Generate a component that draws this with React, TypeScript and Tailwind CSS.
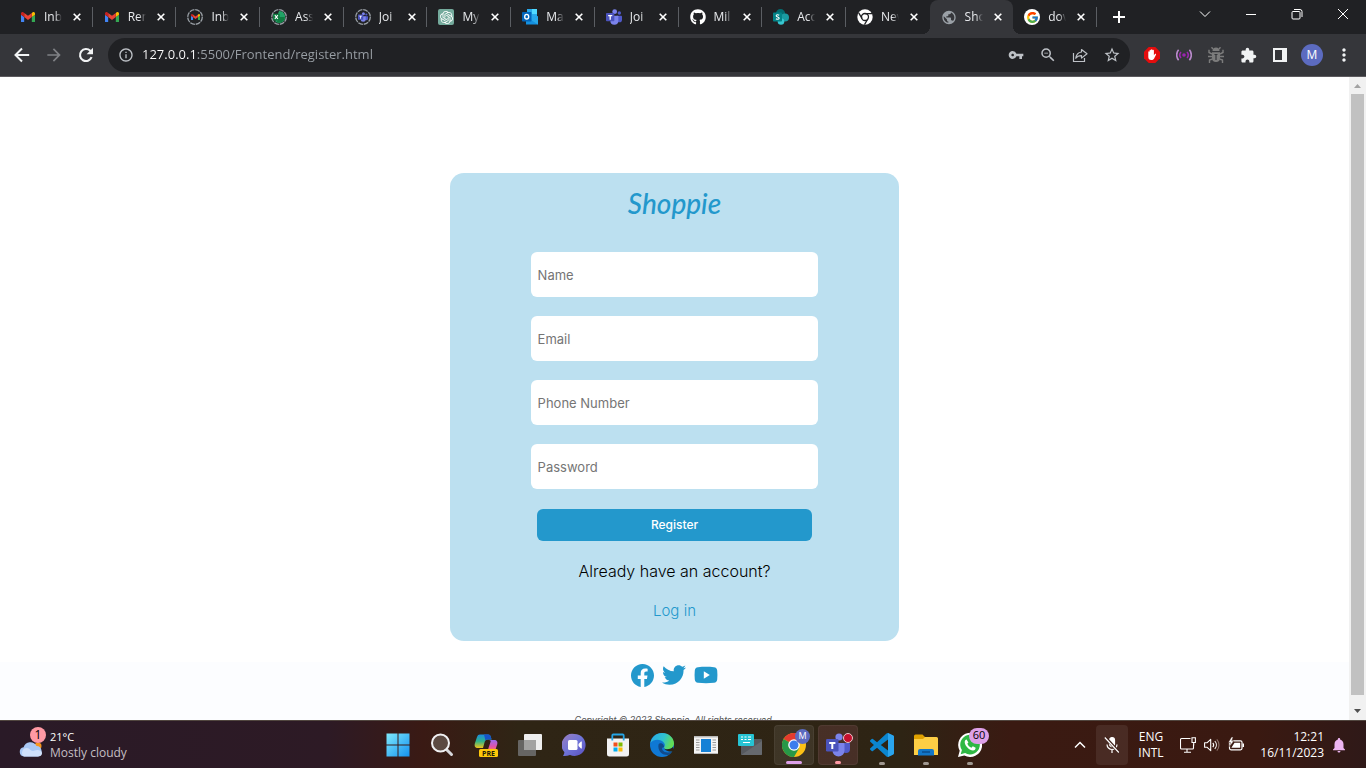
import type { ReactNode } from "react";
import {
  MdArrowForward,
  MdInfoOutline,
  MdVpnKey,
  MdZoomOut,
  MdStarBorder,
  MdExtension,
  MdMoreVert,
  MdPublic,
  MdNotifications,
} from "react-icons/md";
import { FaGithub, FaTwitter } from "react-icons/fa";
import { BsFacebook } from "react-icons/bs";
import { SiOpenai } from "react-icons/si";
import { FcGoogle } from "react-icons/fc";

/* ---------- tab icons ---------- */

function Gmail({ className }: { className?: string }) {
  return (
    <svg viewBox="52 42 88 66" className={className}>
      <path fill="#4285f4" d="M58 108h14V74L52 59v43c0 3.32 2.69 6 6 6" />
      <path fill="#34a853" d="M120 108h14c3.32 0 6-2.69 6-6V59l-20 15" />
      <path fill="#fbbc04" d="M120 48v26l20-15v-8c0-7.42-8.47-11.65-14.4-7.2" />
      <path fill="#ea4335" d="M72 74V48l24 18 24-18v26L96 92" />
      <path fill="#c5221f" d="M52 51v8l20 15V48l-5.6-4.2c-5.94-4.45-14.4-.22-14.4 7.2" />
    </svg>
  );
}

function Teams({ className }: { className?: string }) {
  return (
    <svg viewBox="0 0 24 24" className={className}>
      <circle cx="20" cy="6" r="2.6" fill="#5059c9" />
      <path d="M16 10h7a1 1 0 0 1 1 1v5a4 4 0 0 1-8 0z" fill="#5059c9" />
      <circle cx="13" cy="4" r="3.6" fill="#7b83eb" />
      <path d="M7 10h10.500a1 1 0 0 1 1 1v6.500a6 6 0 0 1-12 0z" fill="#7b83eb" />
      <rect x="0" y="6" width="12.500" height="12.500" rx="1.200" fill="#4b53bc" />
      <path d="M3.200 9h6.200v1.900H7.300V16H5.300v-5.100H3.200z" fill="#fff" />
    </svg>
  );
}

function Loading({ children }: { children: ReactNode }) {
  return (
    <span className="relative flex size-4 items-center justify-center">
      <svg viewBox="0 0 16 16" className="absolute inset-0 size-4">
        <circle cx="8" cy="8" r="7.300" fill="none" stroke="#9aa0a6" strokeWidth="1.300" strokeDasharray="4.900 .830" />
      </svg>
      {children}
    </span>
  );
}

function Excel() {
  return (
    <svg viewBox="0 0 16 16" className="size-3">
      <path d="M8 0a8 8 0 1 1-5 14z" fill="#21a366" />
      <path d="M8 8h8a8 8 0 0 1-11 7z" fill="#107c41" />
      <rect x="0" y="3.500" width="9" height="9" rx="1" fill="#107c41" />
      <path d="M2.500 5.500l4 5M6.500 5.500l-4 5" stroke="#fff" strokeWidth="1.400" />
    </svg>
  );
}

function Outlook() {
  return (
    <svg viewBox="0 0 16 16" className="size-4">
      <rect x="5" y="0" width="10" height="11" fill="#28a8ea" />
      <rect x="10" y="0" width="5" height="5" fill="#50d9ff" />
      <path d="M4 7l6 4 6-4v8.500H4z" fill="#1490df" />
      <path d="M16 7v8.500L9 11z" fill="#28a8ea" />
      <rect x="0" y="3" width="9.500" height="9.500" rx=".8" fill="#0364b8" />
      <ellipse cx="4.700" cy="7.700" rx="2" ry="2.300" fill="none" stroke="#fff" strokeWidth="1.400" />
    </svg>
  );
}

function SharePoint() {
  return (
    <svg viewBox="0 0 16 16" className="size-4">
      <circle cx="7.500" cy="4.700" r="4.700" fill="#036c70" />
      <circle cx="12" cy="8.500" r="4" fill="#1a9ba1" />
      <circle cx="8" cy="12.500" r="3.300" fill="#37c6d0" />
      <rect x="0" y="3.500" width="9" height="9" rx=".8" fill="#038387" />
      <path d="M6.200 6.200C5 5.400 3.200 5.500 3.200 6.700c0 1.500 3 .9 3 2.500 0 1.300-2 1.400-3.200.5" fill="none" stroke="#fff" strokeWidth="1.100" />
    </svg>
  );
}

function ChromeMono() {
  return (
    <svg viewBox="0 0 16 16" className="size-4">
      <circle cx="8" cy="8" r="7.700" fill="#fff" />
      <circle cx="8" cy="8" r="3.500" fill="#fff" stroke="#202124" strokeWidth="1.300" />
      <path d="M8 4.600h7M5.100 9.700L1.700 3.900M10.900 9.700L7.500 15.600" stroke="#202124" strokeWidth="1.300" />
    </svg>
  );
}

const tabs: { title: string; icon: ReactNode; active?: boolean; line?: boolean }[] = [
  { title: "Inb", icon: <Gmail className="w-[14px]" />, line: true },
  { title: "Ren", icon: <Gmail className="w-[14px]" />, line: true },
  { title: "Inb", icon: <Loading><Gmail className="w-[9px]" /></Loading>, line: true },
  { title: "Ass", icon: <Loading><Excel /></Loading>, line: true },
  { title: "Joi", icon: <Loading><Teams className="size-[10px]" /></Loading>, line: true },
  {
    title: "My",
    icon: (
      <span className="flex size-4 items-center justify-center rounded-[2px] bg-[#74aa9c] text-white">
        <SiOpenai size={13} />
      </span>
    ),
    line: true,
  },
  { title: "Ma", icon: <Outlook />, line: true },
  { title: "Joi", icon: <Teams className="size-4" />, line: true },
  { title: "Mil", icon: <FaGithub size={16} className="text-white" />, line: true },
  { title: "Acc", icon: <SharePoint />, line: true },
  { title: "Nev", icon: <ChromeMono /> },
  { title: "Sho", icon: <MdPublic size={17} className="text-[#9aa0a6]" />, active: true },
  {
    title: "dov",
    icon: (
      <span className="flex size-4 items-center justify-center rounded-full bg-white">
        <FcGoogle size={13} />
      </span>
    ),
    line: true,
  },
];

function TabFoot({ side }: { side: "left" | "right" }) {
  return (
    <span
      className={
        side === "left"
          ? "absolute bottom-0 -left-2 size-2 bg-[radial-gradient(circle_at_0_0,transparent_8px,#35363a_8px)]"
          : "absolute bottom-0 -right-2 size-2 bg-[radial-gradient(circle_at_100%_0,transparent_8px,#35363a_8px)]"
      }
    />
  );
}

function TabStrip() {
  return (
    <header className="flex h-[34px] shrink-0 bg-[#202124] pl-[9px] text-[#e8eaed]">
      <div role="tablist" className="flex max-w-[1088px] min-w-0 flex-1">
        {tabs.map((t, i) => (
          <div
            key={i}
            role="tab"
            aria-selected={!!t.active}
            className={
              "relative flex min-w-0 flex-1 items-center pl-[11px] " +
              (t.active ? "rounded-t-lg bg-[#35363a]" : "")
            }
          >
            {t.active && <TabFoot side="left" />}
            {t.active && <TabFoot side="right" />}
            <span className="flex size-4 shrink-0 items-center justify-center">{t.icon}</span>
            <span className="ml-2 w-[18px] overflow-hidden text-xs whitespace-nowrap [mask-image:linear-gradient(to_right,black_60%,transparent)]">
              {t.title}
            </span>
            <button aria-label="Close tab" className="ml-[7px] flex size-4 items-center justify-center">
              <svg viewBox="0 0 8 8" className="size-2">
                <path d="M.7.7l6.600 6.600M7.300.7L.7 7.300" stroke="#fff" strokeWidth="1.600" />
              </svg>
            </button>
            {t.line && <span className="ml-auto h-5 w-px bg-[#5b5e63]" />}
          </div>
        ))}
      </div>
      <button aria-label="New tab" className="flex w-11 items-center justify-center">
        <svg viewBox="0 0 12 12" className="size-3">
          <path d="M6 0v12M0 6h12" stroke="#fff" strokeWidth="2" />
        </svg>
      </button>
      <div className="ml-auto flex h-7">
        {[
          ["Search tabs", "M1 3.500l5 5 5-5"],
          ["Minimize", "M1 6.500h10"],
          ["Restore", "M3 1.500h6a2 2 0 0 1 2 2V9M2 3.500h6a1 1 0 0 1 1 1V10a1 1 0 0 1-1 1H2a1 1 0 0 1-1-1V4.500a1 1 0 0 1 1-1z"],
          ["Close", "M1 1l10 10M11 1L1 11"],
        ].map(([label, d]) => (
          <button key={label} aria-label={label} className="flex w-[46px] items-center justify-center">
            <svg viewBox="0 0 12 12" className="size-3" fill="none" stroke="#fff">
              <path d={d} />
            </svg>
          </button>
        ))}
      </div>
    </header>
  );
}

function ToolButton({ label, children }: { label: string; children: ReactNode }) {
  return (
    <button aria-label={label} className="flex size-8 shrink-0 items-center justify-center">
      {children}
    </button>
  );
}

function Toolbar() {
  return (
    <nav className="flex h-[43px] shrink-0 items-center border-b border-[#5c5a5e] bg-[#35363a] px-1.5 text-[#f1f3f4]">
      <ToolButton label="Back">
        <svg viewBox="0 0 16 16" className="size-4" fill="none" stroke="currentColor" strokeWidth="2">
          <path d="M15.200 8H2.500M8 1.500L1.500 8 8 14.500" />
        </svg>
      </ToolButton>
      <ToolButton label="Forward"><MdArrowForward size={20} className="text-[#7f8185]" /></ToolButton>
      <ToolButton label="Reload">
        <svg viewBox="0 0 16 16" className="size-4">
          <path d="M13.600 10.200A6 6 0 1 1 12.300 3.800L13.500 5" fill="none" stroke="currentColor" strokeWidth="2.100" />
          <path d="M15 .8v6.400H8.600z" fill="currentColor" />
        </svg>
      </ToolButton>
      <div className="mx-1.5 flex h-[34px] flex-1 items-center rounded-full bg-[#202124] pr-0.5 pl-2.5 text-[#bdc1c6]">
        <MdInfoOutline size={16} className="shrink-0" />
        <input
          aria-label="Address"
          defaultValue="127.0.0.1:5500/Frontend/register.html"
          className="ml-2 min-w-0 flex-1 bg-linear-to-r from-white from-[55px] to-[#9aa0a6] to-[55px] bg-clip-text text-[13px] text-transparent outline-none"
        />
        <ToolButton label="Passwords"><MdVpnKey size={16} /></ToolButton>
        <ToolButton label="Zoom"><MdZoomOut size={18} /></ToolButton>
        <ToolButton label="Share">
          <svg viewBox="0 0 16 16" className="size-4" fill="none" stroke="currentColor" strokeWidth="1.200">
            <path d="M1.500 6v8.500h11V11" />
            <path d="M9.500 2.500L15 6.800l-5.500 4.300V8.600C7 8.600 5 9.400 3.800 11.300 4.200 8 6.200 5.500 9.500 5z" strokeLinejoin="round" />
          </svg>
        </ToolButton>
        <ToolButton label="Bookmark"><MdStarBorder size={18} /></ToolButton>
      </div>
      <ToolButton label="Ad blocker">
        <svg viewBox="0 0 16 16" className="size-4">
          <path d="M4.700 0h6.600L16 4.700v6.600L11.300 16H4.700L0 11.300V4.700z" fill="#e40d0d" />
          <path d="M4.300 8.200V5c0-.9 1.300-.9 1.300 0V3.600c0-1 1.400-1 1.400 0V3c0-1 1.500-1 1.500 0v.6c0-1 1.400-1 1.400 0v4.600l.8-1c.7-.8 1.800-.2 1.300.6l-2 4c-.6 1-1.300 1.200-2.700 1.200-2 0-3-1.200-3-3z" fill="#fff" />
        </svg>
      </ToolButton>
      <ToolButton label="Live reload">
        <svg viewBox="0 0 16 16" className="size-4" fill="none" stroke="#9c27b0" strokeWidth="1.600">
          <circle cx="8" cy="8" r="1" fill="#9c27b0" />
          <path d="M5 5a4.500 4.500 0 0 0 0 6M11 5a4.500 4.500 0 0 1 0 6" />
          <path d="M2.600 2.800a8 8 0 0 0 0 10.400M13.400 2.800a8 8 0 0 1 0 10.400" stroke="#b98acb" />
        </svg>
      </ToolButton>
      <ToolButton label="Debugger">
        <svg viewBox="0 0 16 16" className="size-4" fill="#7c7c7c">
          <path d="M4.500 4a3.500 3.500 0 0 1 7 0z" />
          <path d="M4 5.300h8V11a4 4 0 0 1-8 0z" />
          <path d="M4 7L1 5.500V2.800M12 7l3-1.500V2.800M4 9.500H0M12 9.500h4M4.500 12L1.500 13v3M11.500 12l3 1v3M5 2L3.500.3M11 2l1.500-1.700" fill="none" stroke="#7c7c7c" strokeWidth="1.400" />
          <path d="M8 7.500V13M6.500 7.500h3" stroke="#35363a" strokeWidth="1.200" />
        </svg>
      </ToolButton>
      <ToolButton label="Extensions"><MdExtension size={17} /></ToolButton>
      <ToolButton label="Side panel">
        <svg viewBox="0 0 14 14" className="size-3.5">
          <path d="M0 0h14v14H0zM2 2v10h7V2z" fill="#f1f3f4" fillRule="evenodd" />
        </svg>
      </ToolButton>
      <ToolButton label="Profile">
        <span className="flex size-[22px] items-center justify-center rounded-full bg-[#5c6bc0] text-xs text-white">M</span>
      </ToolButton>
      <ToolButton label="Menu"><MdMoreVert size={20} /></ToolButton>
    </nav>
  );
}

/* ---------- register page ---------- */

const fields = [
  { id: "name", label: "Name", type: "text" },
  { id: "email", label: "Email", type: "email" },
  { id: "phone", label: "Phone Number", type: "tel" },
  { id: "password", label: "Password", type: "password" },
];

function RegisterPage() {
  return (
    <main className="flex min-w-0 flex-1 flex-col items-center overflow-hidden bg-white pt-24 font-[Inter,sans-serif]">
      <form className="flex w-1/3 shrink-0 flex-col items-center rounded-[14px] bg-[#bce0f0] pt-3 pb-[18px]">
        <h1 className="h-[67px] font-[Lato,sans-serif] text-[28px] leading-9 font-medium text-[#2398cc] italic">
          Shoppie
        </h1>
        <div className="flex w-[64%] flex-col gap-[19px]">
          {fields.map((f) => (
            <label key={f.id} htmlFor={f.id} className="block">
              <input
                id={f.id}
                type={f.type}
                aria-label={f.label}
                placeholder={f.label}
                className="block h-[45px] w-full rounded-md bg-white px-[7px] text-[13px] text-black outline-none placeholder:text-[#757575]"
              />
            </label>
          ))}
        </div>
        <button type="button" className="mt-5 h-8 w-[61%] rounded-md bg-[#2398cc] text-xs font-medium text-white">
          Register
        </button>
        <p className="mt-[18px] text-base leading-6 font-light text-black">Already have an account?</p>
        <a href="#login" className="mt-4 text-[15px] leading-6 font-light text-[#2398cc]">
          Log in
        </a>
      </form>
      <footer className="mt-[21px] flex w-full shrink-0 flex-col items-center bg-[#fcfdff] pt-px">
        <div className="flex items-center gap-2 text-[#2398cc]">
          <a href="#facebook" aria-label="Facebook"><BsFacebook size={23} /></a>
          <a href="#twitter" aria-label="Twitter"><FaTwitter size={24} /></a>
          <a href="#youtube" aria-label="YouTube">
            <svg viewBox="0 0 24 24" className="size-6">
              <path d="M4 4.200C9 3.700 15 3.700 20 4.200c2 .2 3 1.300 3.200 3.300.3 3 .3 6 0 9-.2 2-1.200 3.100-3.200 3.300-5 .5-11 .5-16 0-2-.2-3-1.300-3.200-3.300-.3-3-.3-6 0-9C1 5.500 2 4.400 4 4.200z" fill="currentColor" />
              <path d="M9.800 8.300l6 3.700-6 3.700z" fill="#fff" />
            </svg>
          </a>
        </div>
        <p className="mt-[25px] text-[9px] leading-4 text-[#555555] italic">
          Copyright © 2023 Shoppie. All rights reserved.
        </p>
      </footer>
    </main>
  );
}

function Scrollbar() {
  return (
    <div aria-hidden="true" className="flex w-[17px] shrink-0 flex-col items-center bg-[#f1f1f1]">
      <svg viewBox="0 0 17 17" className="size-[17px] shrink-0"><path d="M5 11l3.500-4 3.500 4z" fill="#a3a3a3" /></svg>
      <div className="w-[13px] flex-1 bg-[#c1c1c1]" />
      <div className="h-2" />
      <svg viewBox="0 0 17 17" className="size-[17px] shrink-0"><path d="M5 6l3.500 4L12 6z" fill="#505050" /></svg>
    </div>
  );
}

/* ---------- taskbar ---------- */

const apps: { label: string; icon: ReactNode; box?: string; mark?: string; badge?: ReactNode }[] = [
  {
    label: "Start",
    icon: (
      <svg viewBox="0 0 24 24" className="size-6">
        <defs>
          <linearGradient id="win" x1="0" y1="0" x2="1" y2="1" gradientUnits="objectBoundingBox">
            <stop offset="0" stopColor="#7fe9fc" />
            <stop offset="1" stopColor="#1492f0" />
          </linearGradient>
        </defs>
        <path d="M.5.500h11v11H.5zM12.500.500h11v11h-11zM.5 12.500h11v11H.5zM12.500 12.500h11v11h-11z" fill="url(#win)" />
      </svg>
    ),
  },
  {
    label: "Search",
    icon: (
      <svg viewBox="0 0 24 24" className="size-6">
        <path d="M16 16l5.500 5.500" stroke="#d8d8dc" strokeWidth="3" strokeLinecap="round" />
        <circle cx="10.500" cy="10" r="8.500" fill="#5c4a42" stroke="#f0f0f2" strokeWidth="2" />
      </svg>
    ),
  },
  {
    label: "Copilot",
    icon: (
      <svg viewBox="0 0 24 24" className="size-6">
        <defs>
          <linearGradient id="cpA" x1="0" y1="0" x2="0" y2="1">
            <stop offset="0" stopColor="#1b8be0" />
            <stop offset=".5" stopColor="#2fb38a" />
            <stop offset="1" stopColor="#f0c419" />
          </linearGradient>
          <linearGradient id="cpB" x1="0" y1="0" x2="0" y2="1">
            <stop offset="0" stopColor="#9a6bf0" />
            <stop offset=".6" stopColor="#e352a8" />
            <stop offset="1" stopColor="#f78a4a" />
          </linearGradient>
        </defs>
        <path d="M6 1.500h8c2 0 2.500 1 3 3l.5 2H14c-2 0-3 1-3.500 3L9 15H4c-3 0-4-2-3-5l2-6c.6-1.700 1.500-2.500 3-2.500z" fill="url(#cpA)" />
        <path d="M14 1.500c2 0 2.500 1 3 3l.5 2H14c-1 0-2 .5-2.500 1.300L10 1.500z" fill="#1653c8" />
        <path d="M15 7h5c3 0 4 2 3 5l-2 6h-9c2 0 2-1 2.500-3l2-6c.4-1 .5-2-1.500-2z" fill="url(#cpB)" />
        <rect x="5" y="16" width="19" height="8" rx="1.500" fill="#ffc80a" />
        <text x="14.500" y="22.600" textAnchor="middle" fontSize="7" fontWeight="700" fill="#201a08" fontFamily="Open Sans, sans-serif">PRE</text>
      </svg>
    ),
  },
  {
    label: "Task view",
    icon: (
      <svg viewBox="0 0 24 24" className="size-6">
        <rect x="6" y="1" width="18" height="16" rx="1" fill="#eeeeee" />
        <rect x="0" y="7" width="18" height="16" rx="1" fill="#666563" />
        <path d="M6 7h12v10H6z" fill="#a2a2a1" />
      </svg>
    ),
  },
  {
    label: "Chat",
    icon: (
      <svg viewBox="0 0 24 24" className="size-6">
        <defs>
          <linearGradient id="chat" x1="0" y1="0" x2="1" y2="1">
            <stop offset="0" stopColor="#9a7fc0" />
            <stop offset=".5" stopColor="#6f74d8" />
            <stop offset="1" stopColor="#5a4fc0" />
          </linearGradient>
        </defs>
        <path d="M12.500 1A11 11 0 1 1 8 22c-2 .8-4.500 1.200-7 1 1-1.600 1.500-3 1.300-4A11 11 0 0 1 12.500 1z" fill="url(#chat)" />
        <rect x="6" y="7" width="9.500" height="10" rx="1.500" fill="#fff" />
        <path d="M16.500 11l2.500-2.500h.8v7H19l-2.500-2.500z" fill="#fff" />
      </svg>
    ),
  },
  {
    label: "Store",
    icon: (
      <svg viewBox="0 0 24 24" className="size-6">
        <path d="M1 5.500h22V21a2.500 2.500 0 0 1-2.500 2.500h-17A2.500 2.500 0 0 1 1 21z" fill="#f2f2f2" />
        <path d="M6.300 7.500V2.500a1 1 0 0 1 1-1h9.400a1 1 0 0 1 1 1v5" fill="none" stroke="#25a5e6" strokeWidth="1.800" />
        <path d="M7.500 9.500h4v4h-4z" fill="#f1511b" />
        <path d="M12.500 9.500h4v4h-4z" fill="#80bb01" />
        <path d="M7.500 14.500h4v4h-4z" fill="#00adef" />
        <path d="M12.500 14.500h4v4h-4z" fill="#fbbc09" />
      </svg>
    ),
  },
  {
    label: "Edge",
    icon: (
      <svg viewBox="0 0 24 24" className="size-6">
        <defs>
          <linearGradient id="edge" x1="0" y1="0" x2="1" y2=".3">
            <stop offset="0" stopColor="#2aa8e8" />
            <stop offset=".6" stopColor="#2fc2cf" />
            <stop offset="1" stopColor="#62dd56" />
          </linearGradient>
        </defs>
        <circle cx="12" cy="12" r="12" fill="#0f78d4" />
        <path d="M.4 10C1.500 4 6 0 12 0c7 0 12 5 12 10.500 0 3.500-3 5.700-6.500 5.700-2.500 0-3.800-1-3.500-1.800 1.200-1.400 1-3.200.1-4.400C11 6 4 5.500.4 10z" fill="url(#edge)" />
        <path d="M8.500 11.500c-1 6 3 11 10 10.500l3.500-3.500c-3 1.800-8 1.200-9.500-1.500-1-1.800 0-3.200 1.500-2.600.5-3.500-4-5.400-5.500-2.900z" fill="#114a8b" />
        <path d="M14 14.400c-.3.800 1 1.800 3.500 1.800 2 0 4-.7 5.400-2.200L24 17l-1.600 1.600c-3.400 0-8-1-8.400-4.200z" fill="#2b2415" />
      </svg>
    ),
  },
  {
    label: "News",
    icon: (
      <svg viewBox="0 0 24 24" className="size-6">
        <rect x="0" y="3" width="24" height="18" fill="#f4f4f4" />
        <path d="M0 3h24v1.500H0zM0 20h24v1H0z" fill="#b9b9b9" />
        <rect x="7" y="6" width="10" height="13" fill="#1581d6" />
        <path d="M2 7h3.500M2 9.500h3.500M2 12h3.500M2 14.500h3.500M2 17h3.500M18.500 7H22M18.500 9.500H22M18.500 12H22M18.500 14.500H22M18.500 17H22" stroke="#9a9a9a" />
      </svg>
    ),
  },
  {
    label: "Remote keyboard",
    icon: (
      <svg viewBox="0 0 24 24" className="size-6">
        <rect x="3" y="6" width="21" height="16" rx="1" fill="#56595e" />
        <path d="M3 22L24 8v13a1 1 0 0 1-1 1z" fill="#66696e" />
        <rect x="0" y="1" width="16" height="12" rx="1" fill="#26c4d4" />
        <path d="M3 4h2M6.500 4h2M10 4h3M3 6.500h2M6.500 6.500h2M10 6.500h3M5 9.500h7" stroke="#fff" strokeWidth="1.200" />
      </svg>
    ),
  },
  {
    label: "Chrome",
    box: "bg-white/8 border border-white/5",
    mark: "w-4 bg-[#dda0e8]",
    icon: (
      <svg viewBox="0 0 24 24" className="size-6">
        <circle cx="12" cy="12" r="12" fill="#fbc116" />
        <path d="M12 12L1.600 6A12 12 0 0 1 22.400 6z" fill="#e33b2e" />
        <path d="M1.600 6A12 12 0 0 0 12 24l5.200-9L12 12z" fill="#279847" />
        <circle cx="12" cy="12" r="5.800" fill="#fff" />
        <circle cx="12" cy="12" r="4.500" fill="#3b7ded" />
      </svg>
    ),
    badge: (
      <span className="absolute top-[3px] right-[3px] flex size-[15px] items-center justify-center rounded-full bg-[#5c6bc0] text-[9px] text-white">M</span>
    ),
  },
  {
    label: "Teams",
    box: "bg-[#ff80b0]/12 border border-white/5",
    mark: "w-1.5 bg-[#ff99a4]",
    icon: <Teams className="size-6" />,
    badge: <span className="absolute top-[7px] right-[4px] size-[10px] rounded-full border border-[#e9c4c8] bg-[#c50f2e]" />,
  },
  {
    label: "Visual Studio Code",
    mark: "w-1.5 bg-[#a09890]",
    icon: (
      <svg viewBox="0 0 24 24" className="size-6">
        <path
          d="M23.150 2.587L18.210.210a1.494 1.494 0 0 0-1.705.290l-9.460 8.630-4.120-3.128a.999.999 0 0 0-1.276.057L.327 7.261A1 1 0 0 0 .326 8.740L3.899 12 .326 15.260a1 1 0 0 0 .001 1.479L1.650 17.940a.999.999 0 0 0 1.276.057l4.120-3.128 9.460 8.630a1.492 1.492 0 0 0 1.704.290l4.942-2.377A1.500 1.500 0 0 0 24 20.060V3.939a1.500 1.500 0 0 0-.850-1.352zm-5.146 14.861L10.826 12l7.178-5.448v10.896z"
          fill="#0b86cf"
        />
        <path d="M18 0.100l5.200 2.500c.5.300.8.800.8 1.300v16.200c0 .5-.3 1-.8 1.300L18 23.900z" fill="#2aa5ee" />
      </svg>
    ),
  },
  {
    label: "File Explorer",
    mark: "w-1.5 bg-[#a09890]",
    icon: (
      <svg viewBox="0 0 24 24" className="size-6">
        <path d="M0 3a1.500 1.500 0 0 1 1.500-1.500h7L11 4v5H0z" fill="#e0a100" />
        <path d="M0 6h9l2-2h11.500A1.500 1.500 0 0 1 24 5.500V22H0z" fill="#fdce45" />
        <path d="M4 22.500V18a2 2 0 0 1 2-2h12a2 2 0 0 1 2 2v4.500z" fill="#1277c9" />
        <path d="M8 19h8" stroke="#0b4f93" strokeWidth="1.600" />
      </svg>
    ),
  },
  {
    label: "WhatsApp",
    mark: "w-1.5 bg-[#a09890]",
    icon: (
      <svg viewBox="0 0 24 24" className="size-6">
        <path d="M0 24l1.700-6.200A12 12 0 1 1 6.300 22.400z" fill="#fff" />
        <path d="M2.700 21.300l1.200-4.200a9.800 9.800 0 1 1 3.200 3z" fill="#2fb844" />
        <path d="M8.600 6.500c-.9 0-2 1.300-1.900 2.700.3 4 4.800 8.200 8.300 8.200 1.600 0 2.700-1 2.600-2.600l-2.800-1.500-1.300 1.500c-2.200-.9-3.300-2-4.200-4l1.100-1.300z" fill="#fff" />
      </svg>
    ),
    badge: (
      <span className="absolute top-[3px] left-[19px] flex h-4 w-5 items-center justify-center rounded-full bg-[#dda0e8] text-[11px] text-black">60</span>
    ),
  },
];

function Taskbar() {
  return (
    <footer className="grid h-12 shrink-0 grid-cols-[1fr_auto_1fr] border-t border-[#51463f] bg-[linear-gradient(90deg,#2a1a27_0%,#2d1a25_24%,#3a1a14_31%,#2f2515_38%,#2e2414_66%,#3a1a12_74%,#3a1911_92%,#2f1918_100%)] text-xs text-white">
      <button className="flex items-center gap-[7px] pl-[19px] text-left">
        <span className="relative flex size-6 items-end">
          <svg viewBox="0 0 24 16" className="h-4 w-6">
            <circle cx="19" cy="5" r="3.500" fill="#f7941d" />
            <path d="M5 15.500a4.700 4.700 0 0 1-.4-9.300A7 7 0 0 1 17.500 5 5.400 5.400 0 0 1 19 15.500z" fill="#a9c8f5" />
            <path d="M5 15.500a4.700 4.700 0 0 1 3-8.500c3 0 3 3 6 3 2 0 3-2 8 0 2 2 1 5.500-3 5.500z" fill="#cfe0fb" />
          </svg>
          <span className="absolute -top-1.5 left-[11px] flex size-4 items-center justify-center rounded-full bg-[#ff99a4] text-xs text-black">1</span>
        </span>
        <span className="leading-4">
          <span className="block text-[11px]">21°C</span>
          <span className="block text-[#c5bfc3]">Mostly cloudy</span>
        </span>
      </button>

      <div className="flex items-center gap-1 pr-px pl-[3px]">
        {apps.map((a) => (
          <button
            key={a.label}
            aria-label={a.label}
            className={"relative flex size-10 items-center justify-center rounded " + (a.box ?? "")}
          >
            {a.icon}
            {a.badge}
            {a.mark && (
              <span className="absolute inset-x-0 bottom-0 flex justify-center">
                <span className={"h-[3px] rounded-full " + a.mark} />
              </span>
            )}
          </button>
        ))}
      </div>

      <div className="flex items-center justify-end pr-[18px]">
        <button aria-label="Hidden icons" className="flex w-8 items-center justify-center">
          <svg viewBox="0 0 12 12" className="size-3" fill="none" stroke="#fff" strokeWidth="1.500"><path d="M1 8.500l5-5 5 5" /></svg>
        </button>
        <button aria-label="Microphone muted" className="flex h-10 w-8 items-center justify-center rounded bg-white/8">
          <svg viewBox="0 0 16 16" className="size-4" fill="none" stroke="#fff" strokeWidth="1.200">
            <rect x="5.500" y=".6" width="5" height="9" rx="2.500" fill="#fff" />
            <path d="M3 7.500a5 5 0 0 0 10 0M8 12.500V16" />
            <path d="M1.500.5l13.500 15" stroke="#3f211a" strokeWidth="3" />
            <path d="M.8.500l14 15" />
          </svg>
        </button>
        <button className="ml-[6px] w-[34px] leading-4">
          ENG
          <br />
          INTL
        </button>
        <button aria-label="Network, volume and battery" className="ml-[12px] flex items-center gap-2">
          <svg viewBox="0 0 16 16" className="size-4" fill="none" stroke="#fff" strokeWidth="1.100">
            <path d="M10.500 1.500h-9a1 1 0 0 0-1 1V11a1 1 0 0 0 1 1h11a1 1 0 0 0 1-1V7.500M4 15.300h7M7 12v3M12 .7h3.400v4.800H12zM13.700 5.500v3" />
          </svg>
          <svg viewBox="0 0 16 16" className="size-4" fill="none" stroke="#fff" strokeWidth="1.100">
            <path d="M.6 5.700h2.600l3.500-3.400v11.400l-3.500-3.400H.6z" strokeLinejoin="round" />
            <path d="M8.800 5.800a3.500 3.500 0 0 1 0 4.400M10.800 4a6 6 0 0 1 0 8" />
            <path d="M12.800 2.300a8.500 8.500 0 0 1 0 11.400" stroke="#8a7069" />
          </svg>
          <svg viewBox="0 0 16 16" className="size-4">
            <rect x="1.500" y="3.800" width="12.500" height="9" rx="1.500" fill="none" stroke="#fff" strokeWidth="1.200" />
            <path d="M3.500 10.500l3-4.700H12.200v5H3.500zM14.500 6.500H16v3.500h-1.500z" fill="#fff" />
            <path d="M3.500 0L.3 5.500h2L1.500 9.500 6 4h-2.200L5.200 0z" fill="#fff" stroke="#3a1911" strokeWidth=".5" />
          </svg>
        </button>
        <button className="ml-[14px] w-[66px] text-right leading-4">
          12:21
          <br />
          16/11/2023
        </button>
        <button aria-label="Notifications" className="ml-[6px] text-[#edb5f2]"><MdNotifications size={18} /></button>
      </div>
    </footer>
  );
}

export default function App() {
  return (
    <div className="flex h-screen flex-col overflow-hidden font-['Open_Sans',sans-serif]">
      <TabStrip />
      <Toolbar />
      <div className="flex min-h-0 flex-1">
        <RegisterPage />
        <Scrollbar />
      </div>
      <Taskbar />
    </div>
  );
}
